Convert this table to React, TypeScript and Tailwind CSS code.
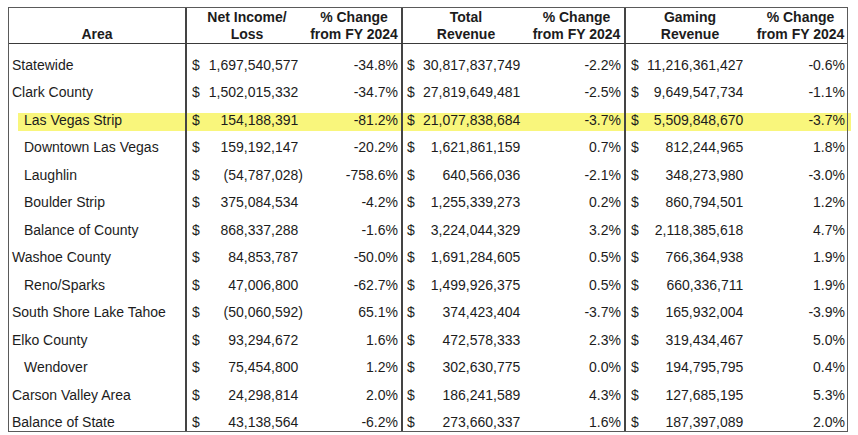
import React from 'react';

type Row = {
  area: string;
  indent?: boolean;
  net: string;
  netPct: string;
  total: string;
  totalPct: string;
  gaming: string;
  gamingPct: string;
};

const rows: Row[] = [
  { area: 'Statewide', net: '1,697,540,577', netPct: '-34.8%', total: '30,817,837,749', totalPct: '-2.2%', gaming: '11,216,361,427', gamingPct: '-0.6%' },
  { area: 'Clark County', net: '1,502,015,332', netPct: '-34.7%', total: '27,819,649,481', totalPct: '-2.5%', gaming: '9,649,547,734', gamingPct: '-1.1%' },
  { area: 'Las Vegas Strip', indent: true, net: '154,188,391', netPct: '-81.2%', total: '21,077,838,684', totalPct: '-3.7%', gaming: '5,509,848,670', gamingPct: '-3.7%' },
  { area: 'Downtown Las Vegas', indent: true, net: '159,192,147', netPct: '-20.2%', total: '1,621,861,159', totalPct: '0.7%', gaming: '812,244,965', gamingPct: '1.8%' },
  { area: 'Laughlin', indent: true, net: '(54,787,028)', netPct: '-758.6%', total: '640,566,036', totalPct: '-2.1%', gaming: '348,273,980', gamingPct: '-3.0%' },
  { area: 'Boulder Strip', indent: true, net: '375,084,534', netPct: '-4.2%', total: '1,255,339,273', totalPct: '0.2%', gaming: '860,794,501', gamingPct: '1.2%' },
  { area: 'Balance of County', indent: true, net: '868,337,288', netPct: '-1.6%', total: '3,224,044,329', totalPct: '3.2%', gaming: '2,118,385,618', gamingPct: '4.7%' },
  { area: 'Washoe County', net: '84,853,787', netPct: '-50.0%', total: '1,691,284,605', totalPct: '0.5%', gaming: '766,364,938', gamingPct: '1.9%' },
  { area: 'Reno/Sparks', indent: true, net: '47,006,800', netPct: '-62.7%', total: '1,499,926,375', totalPct: '0.5%', gaming: '660,336,711', gamingPct: '1.9%' },
  { area: 'South Shore Lake Tahoe', net: '(50,060,592)', netPct: '65.1%', total: '374,423,404', totalPct: '-3.7%', gaming: '165,932,004', gamingPct: '-3.9%' },
  { area: 'Elko County', net: '93,294,672', netPct: '1.6%', total: '472,578,333', totalPct: '2.3%', gaming: '319,434,467', gamingPct: '5.0%' },
  { area: 'Wendover', indent: true, net: '75,454,800', netPct: '1.2%', total: '302,630,775', totalPct: '0.0%', gaming: '194,795,795', gamingPct: '0.4%' },
  { area: 'Carson Valley Area', net: '24,298,814', netPct: '2.0%', total: '186,241,589', totalPct: '4.3%', gaming: '127,685,195', gamingPct: '5.3%' },
  { area: 'Balance of State', net: '43,138,564', netPct: '-6.2%', total: '273,660,337', totalPct: '1.6%', gaming: '187,397,089', gamingPct: '2.0%' },
];

// accounting style: "$" on the left, number right, room kept for ")"
const Money = ({ value, className }: { value: string; className: string }) => {
  const neg = value.startsWith('(');
  return (
    <div className={`flex h-[27.5px] items-end justify-between ${className}`}>
      <span>$</span>
      <span>
        {value}
        {!neg && <span className="invisible">)</span>}
      </span>
    </div>
  );
};

const Head = ({ top, bottom, className = '' }: { top?: string; bottom: string; className?: string }) => (
  <div className={`flex h-[35px] flex-col items-center justify-end text-center font-bold leading-[17px] ${className}`}>
    {top && <span>{top}</span>}
    <span>{bottom}</span>
  </div>
);

const App = () => {
  return (
    <div
      className="relative h-[435px] w-[858px] bg-white pl-[8px] pt-[7px] text-[14px] text-[#1c1c1c]"
      style={{ fontFamily: '"Liberation Sans", Arial, sans-serif' }}
    >
      {/* highlighter stroke over the Las Vegas Strip row */}
      <div className="absolute left-[18px] top-[113px] h-[18px] w-[833px] bg-[#f9f67c]" />

      <div className="relative w-[840px] border border-[#5a5a5a]">
        <div className="grid grid-cols-[176px_122px_94px_128px_95px_130px_93px] border-b border-[#3a3a3a]">
          <Head bottom="Area" />
          <Head top="Net Income/" bottom="Loss" className="border-l-2 border-[#444]" />
          <Head top="% Change" bottom="from FY 2024" />
          <Head top="Total" bottom="Revenue" className="border-l-2 border-[#444]" />
          <Head top="% Change" bottom="from FY 2024" />
          <Head top="Gaming" bottom="Revenue" className="border-l-2 border-[#444]" />
          <Head top="% Change" bottom="from FY 2024" />
        </div>
        <div className="grid grid-cols-[176px_122px_94px_128px_95px_130px_93px] leading-[14px]">
          {rows.map((r) => (
            <React.Fragment key={r.area}>
              <div className={`flex h-[27.5px] items-end ${r.indent ? 'pl-[15px]' : 'pl-[3px]'}`}>{r.area}</div>
              <Money value={r.net} className="border-l-2 border-[#444] pl-[5px] pr-[4px]" />
              <div className="flex h-[27.5px] items-end justify-end pr-[3px]">{r.netPct}</div>
              <Money value={r.total} className="border-l-2 border-[#444] pl-[4px] pr-[4px]" />
              <div className="flex h-[27.5px] items-end justify-end pr-[3px]">{r.totalPct}</div>
              <Money value={r.gaming} className="border-l-2 border-[#444] pl-[5px] pr-[6px]" />
              <div className="flex h-[27.5px] items-end justify-end pr-[2px]">{r.gamingPct}</div>
            </React.Fragment>
          ))}
          <div className="col-span-7 grid h-[2px] grid-cols-subgrid">
            <div />
            <div className="border-l-2 border-[#444]" />
            <div />
            <div className="border-l-2 border-[#444]" />
            <div />
            <div className="border-l-2 border-[#444]" />
            <div />
          </div>
        </div>
      </div>
    </div>
  );
};

export default App;
